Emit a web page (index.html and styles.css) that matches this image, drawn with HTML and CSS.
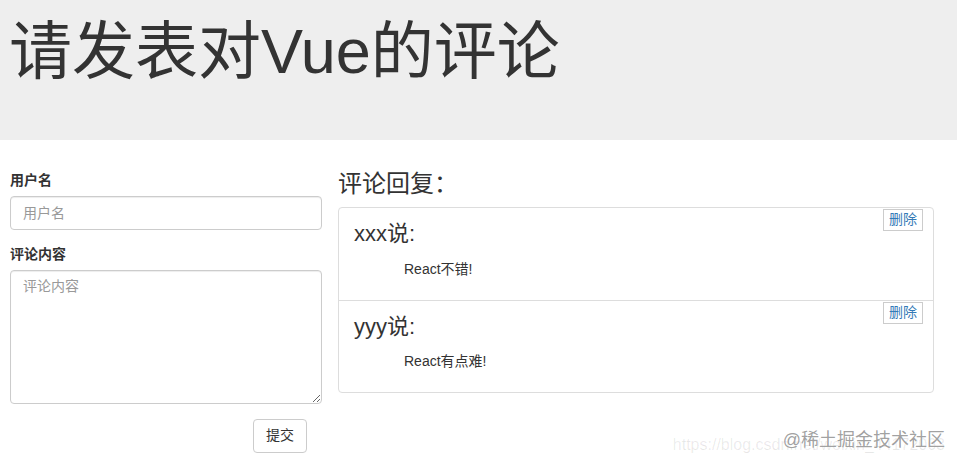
FILE: index.html
```html
<!DOCTYPE html>
<html lang="zh-CN">
<head>
<meta charset="utf-8">
<title>请发表对Vue的评论</title>
<link rel="stylesheet" href="styles.css">
</head>
<body>
<header class="jumbotron">
  <h1 class="title">请发表对Vue的评论</h1>
</header>
<main class="main">
  <section class="form-col">
    <form class="form">
      <div class="form-group">
        <label class="label">用户名</label>
        <input type="text" class="form-control" placeholder="用户名">
      </div>
      <div class="form-group">
        <label class="label">评论内容</label>
        <textarea class="form-control textarea" rows="6" placeholder="评论内容"></textarea>
      </div>
      <div class="form-actions">
        <button type="button" class="btn">提交</button>
      </div>
    </form>
  </section>
  <section class="list-col">
    <h3 class="reply">评论回复：</h3>
    <ul class="list-group">
      <li class="list-item">
        <div class="handle"><a href="#" class="handle-link">删除</a></div>
        <p class="user"><span>xxx</span><span>说:</span></p>
        <p class="centence">React不错!</p>
      </li>
      <li class="list-item">
        <div class="handle"><a href="#" class="handle-link">删除</a></div>
        <p class="user"><span>yyy</span><span>说:</span></p>
        <p class="centence">React有点难!</p>
      </li>
    </ul>
  </section>
</main>
<div class="watermark">
  <span class="wm-url">https://blog.csdn.net/weixin_44172063</span>
  <span class="wm-brand">@稀土掘金技术社区</span>
</div>
</body>
</html>
```
FILE: styles.css
```css
* { box-sizing: border-box; }
html, body { margin: 0; padding: 0; }
body {
  font-family: "Liberation Sans", "Noto Sans CJK SC", sans-serif;
  font-size: 14px;
  line-height: 1.42857;
  color: #333;
  background: #fff;
  width: 957px;
  height: 467px;
  overflow: hidden;
  position: relative;
}
.jumbotron {
  background: #eee;
  height: 140px;
  padding: 17px 10px 0 9px;
}
.title {
  margin: 0;
  font-size: 63px;
  font-weight: 400;
  line-height: 1.1;
  color: #333;
}
.main {
  display: flex;
  gap: 16px;
  padding: 31px 10px 0;
}
.form-col { width: 312px; flex: none; }
.list-col { width: 596px; flex: none; }
.form { margin: 0; }
.form-group { margin-bottom: 15px; }
.label {
  display: block;
  font-weight: 700;
  margin-bottom: 5px;
}
.form-control {
  display: block;
  width: 100%;
  height: 34px;
  padding: 6px 12px;
  font: inherit;
  font-size: 14px;
  line-height: 1.42857;
  color: #555;
  background: #fff;
  border: 1px solid #ccc;
  border-radius: 4px;
  box-shadow: inset 0 1px 1px rgba(0,0,0,.075);
}
.form-control::placeholder { color: #999; }
.textarea {
  height: 134px;
  resize: vertical;
}
.form-actions {
  display: flex;
  justify-content: flex-end;
  padding-right: 15px;
}
.btn {
  font: inherit;
  font-size: 14px;
  line-height: 1.42857;
  padding: 6px 12px;
  color: #333;
  background: #fff;
  border: 1px solid #ccc;
  border-radius: 4px;
  height: 34px;
}
.reply {
  margin: 0 0 10px;
  font-size: 24px;
  font-weight: 400;
  line-height: 1.1;
}
.list-group {
  list-style: none;
  margin: 0;
  padding: 0;
  border: 1px solid #ddd;
  border-radius: 4px;
}
.list-item {
  position: relative;
  padding: 10px 15px;
}
.list-item + .list-item { border-top: 1px solid #ddd; }
.handle {
  position: absolute;
  right: 10px;
  top: 1px;
  width: 40px;
  border: 1px solid #ccc;
  background: #fff;
  text-align: center;
}
.handle-link {
  display: block;
  color: #337ab7;
  text-decoration: none;
}
.user {
  margin: 0 0 10px;
  font-size: 22px;
  line-height: 1.42857;
}
.centence {
  margin: 0 0 10px;
  padding: 0 50px;
}
.watermark {
  position: absolute;
  right: 12px;
  top: 428px;
  width: 280px;
  height: 30px;
}
.wm-url {
  position: absolute;
  right: 0;
  top: 6px;
  font-size: 16px;
  color: rgba(0,0,0,.09);
  white-space: nowrap;
}
.wm-brand {
  position: absolute;
  right: 0;
  top: 0;
  font-size: 18px;
  color: rgba(80,80,80,.55);
  white-space: nowrap;
  text-shadow: 0 0 1px #fff;
}
```
